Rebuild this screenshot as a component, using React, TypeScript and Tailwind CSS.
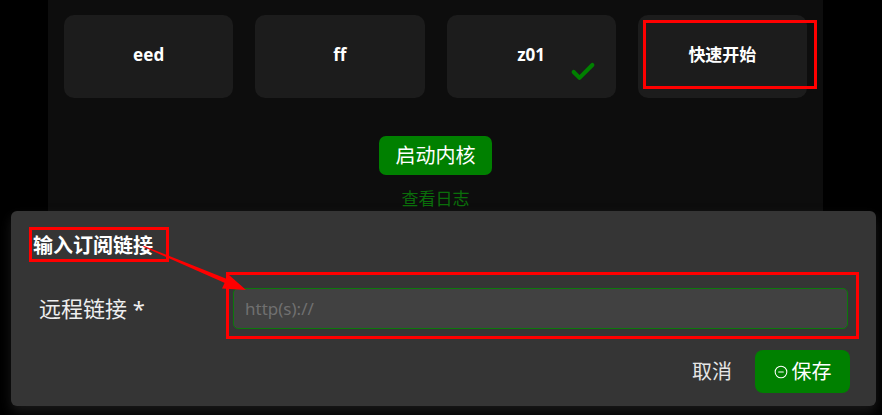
import { Check, CircleMinus } from "lucide-react";

const cards = [
  { name: "eed", active: false },
  { name: "ff", active: false },
  { name: "z01", active: true },
  { name: "快速开始", active: false },
];

const font = { fontFamily: '"Noto Sans", "Noto Sans CJK SC", sans-serif' };

export default function App() {
  return (
    <div className="relative w-[882px] h-[415px] overflow-hidden bg-black" style={font}>
      {/* Profile panel */}
      <div className="ml-[48px] w-[775px] h-[211px] bg-[#0d0d0d] pt-[15px] px-[16px] flex flex-col items-center">
        <div className="grid grid-cols-4 gap-[22px] w-full">
          {cards.map((c) => (
            <div key={c.name} className="relative h-[83px] rounded-[10px] bg-[#1c1c1c] flex items-center justify-center">
              <span className="text-[17px] font-bold text-white -mt-[4px]">{c.name}</span>
              {c.active && (
                <Check className="absolute left-[122px] top-[43px] text-[#008000]" size={28} strokeWidth={3.5} />
              )}
            </div>
          ))}
        </div>
        <button className="mt-[38px] h-[41px] w-[113px] rounded-[7px] bg-[#008000] text-white text-[20px] leading-none">
          启动内核
        </button>
        <span className="mt-[12px] text-[17px] leading-[24px] text-[#0a6e0a]">查看日志</span>
      </div>

      {/* Subscription dialog */}
      <div className="ml-[11px] w-[865px] h-[195px] rounded-[6px] bg-[#353535] shadow-[0_6px_12px_rgba(40,40,40,0.6)] flex flex-col">
        <h2 className="ml-[22px] mt-[22px] text-[20px] leading-[26px] font-bold text-white">输入订阅链接</h2>
        <div className="mt-[29px] flex items-center">
          <label className="ml-[28px] w-[194px] text-[22px] text-[#eeeeee]">远程链接 *</label>
          <input
            placeholder="http(s)://"
            className="h-[41px] w-[615px] rounded-[5px] border border-solid border-[#0c780c] bg-[#414141] px-[11px] text-[17px] text-white placeholder:text-[#707070] outline-none"
          />
        </div>
        <div className="mt-[21px] mr-[26px] flex items-center justify-end gap-[23px]">
          <span className="text-[20px] text-[#e6e6e6]">取消</span>
          <button className="h-[43px] w-[95px] rounded-[8px] bg-[#008000] text-white text-[20px] flex items-center justify-center gap-[4px]">
            <CircleMinus size={14} strokeWidth={1.8} />
            保存
          </button>
        </div>
      </div>

      {/* Annotations */}
      <svg className="absolute inset-0 pointer-events-none" width="882" height="415">
        <rect x="644.5" y="21.5" width="171" height="66" fill="none" stroke="#ff0000" strokeWidth="3" />
        <rect x="30.5" y="228.5" width="137" height="32" fill="none" stroke="#ff0000" strokeWidth="3" />
        <rect x="227.5" y="273.5" width="630" height="64" fill="none" stroke="#ff0000" strokeWidth="3" />
        <polygon points="143,245.5 143.6,247 226,283.5 227,279" fill="#ff0000" />
        <polygon points="246,290 222,288.5 228.5,274.5" fill="#ff0000" />
      </svg>
    </div>
  );
}
